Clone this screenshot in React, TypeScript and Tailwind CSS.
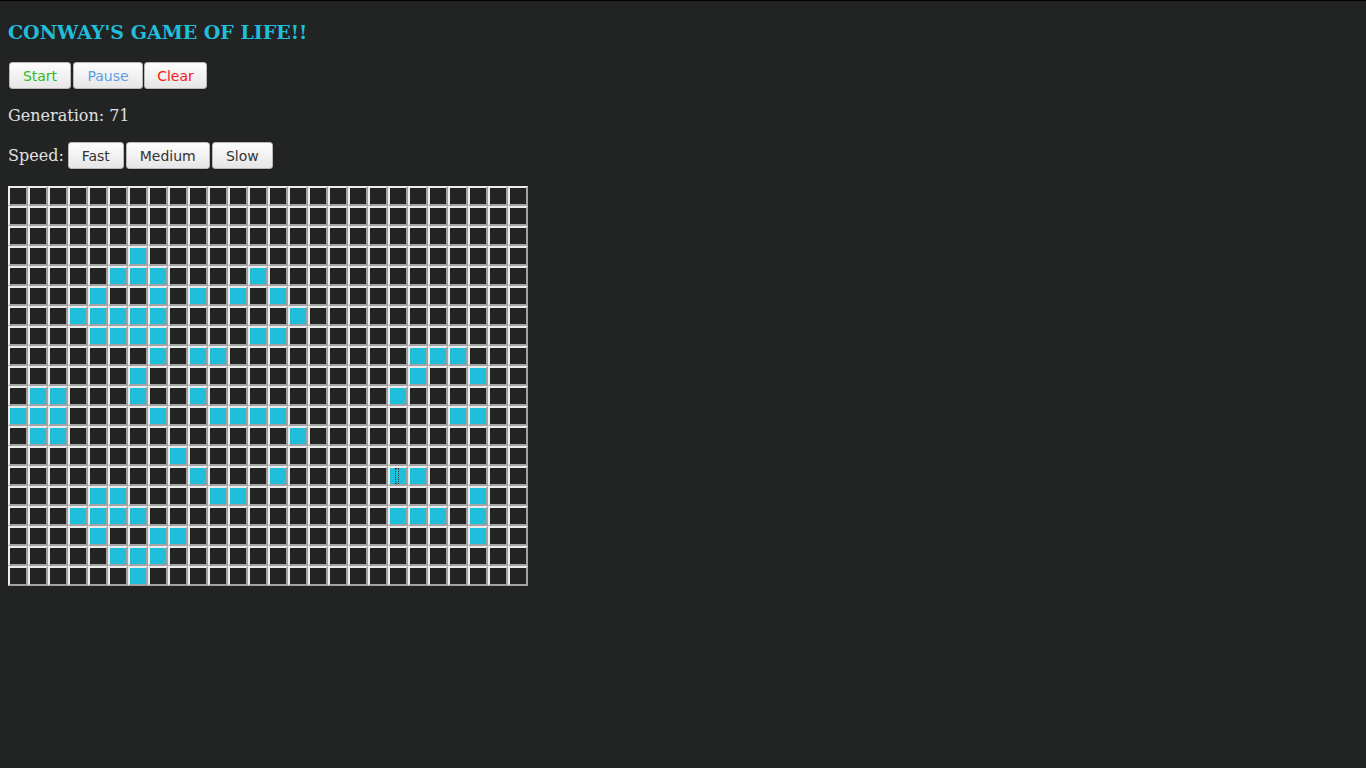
import React from "react";

const ROWS = 20;
const COLS = 26;
const live: Record<number, number[]> = {
  3: [6],
  4: [5, 6, 7, 12],
  5: [4, 7, 9, 11, 13],
  6: [3, 4, 5, 6, 7, 14],
  7: [4, 5, 6, 7, 12, 13],
  8: [7, 9, 10, 20, 21, 22],
  9: [6, 20, 23],
  10: [1, 2, 6, 9, 19],
  11: [0, 1, 2, 7, 10, 11, 12, 13, 22, 23],
  12: [1, 2, 14],
  13: [8],
  14: [9, 13, 19, 20],
  15: [4, 5, 10, 11, 23],
  16: [3, 4, 5, 6, 19, 20, 21, 23],
  17: [4, 7, 8, 23],
  18: [5, 6, 7],
  19: [6],
};

const btn =
  "h-[27px] rounded-[3px] border border-[#b8b8b8] bg-gradient-to-b from-[#fdfdfd] to-[#e6e6e6] text-[14px] leading-none shadow-[0_1px_1px_rgba(0,0,0,0.2)] flex items-center justify-center";
const btnFont = { fontFamily: '"DejaVu Sans", "Open Sans", sans-serif' };

export default function App() {
  const cells: React.ReactNode[] = [];
  for (let r = 0; r < ROWS; r++) {
    for (let c = 0; c < COLS; c++) {
      const on = (live[r] || []).includes(c);
      const focused = r === 14 && c === 19;
      cells.push(
        <div
          key={`${r}-${c}`}
          className={`relative w-[20px] h-[20px] border-2 border-t-[#ececec] border-l-[#ececec] border-b-[#a3a3a3] border-r-[#a3a3a3] ${
            on ? "bg-[#1fbedb]" : "bg-[#222423]"
          }`}
        >
          {focused && (
            <span className="absolute left-[5px] top-0 w-[4px] h-[16px] border border-dotted border-[#333]" />
          )}
        </div>
      );
    }
  }

  return (
    <div
      className="min-h-[768px] w-full bg-[#222423] border-t border-black px-2 pt-[9px] text-[#e0e0e0]"
      style={{ fontFamily: '"DejaVu Serif", serif' }}
    >
      <h1 className="mt-[10px] text-[19px] leading-[24px] font-bold text-[#1fbedb]">
        CONWAY'S GAME OF LIFE!!
      </h1>
      <div className="mt-[18px] flex pl-[1px]" style={btnFont}>
        <button className={`${btn} w-[62px] text-[#33bb22]`}>Start</button>
        <button className={`${btn} ml-[2px] w-[70px] text-[#5c9ee8]`}>Pause</button>
        <button className={`${btn} ml-[1px] w-[63px] text-[#ff1a1a]`}>Clear</button>
      </div>
      <div className="mt-[15px] text-[16px] leading-[24px]">Generation: 71</div>
      <div className="mt-[14px] flex items-center">
        <span className="text-[16px] leading-[24px] mr-[4px]">Speed:</span>
        <div className="flex gap-[2px]" style={btnFont}>
          <button className={`${btn} w-[56px] text-[#333]`}>Fast</button>
          <button className={`${btn} w-[84px] text-[#333]`}>Medium</button>
          <button className={`${btn} w-[61px] text-[#333]`}>Slow</button>
        </div>
      </div>
      <div className="mt-[17px] grid grid-cols-[repeat(26,20px)] w-[520px]">{cells}</div>
    </div>
  );
}
